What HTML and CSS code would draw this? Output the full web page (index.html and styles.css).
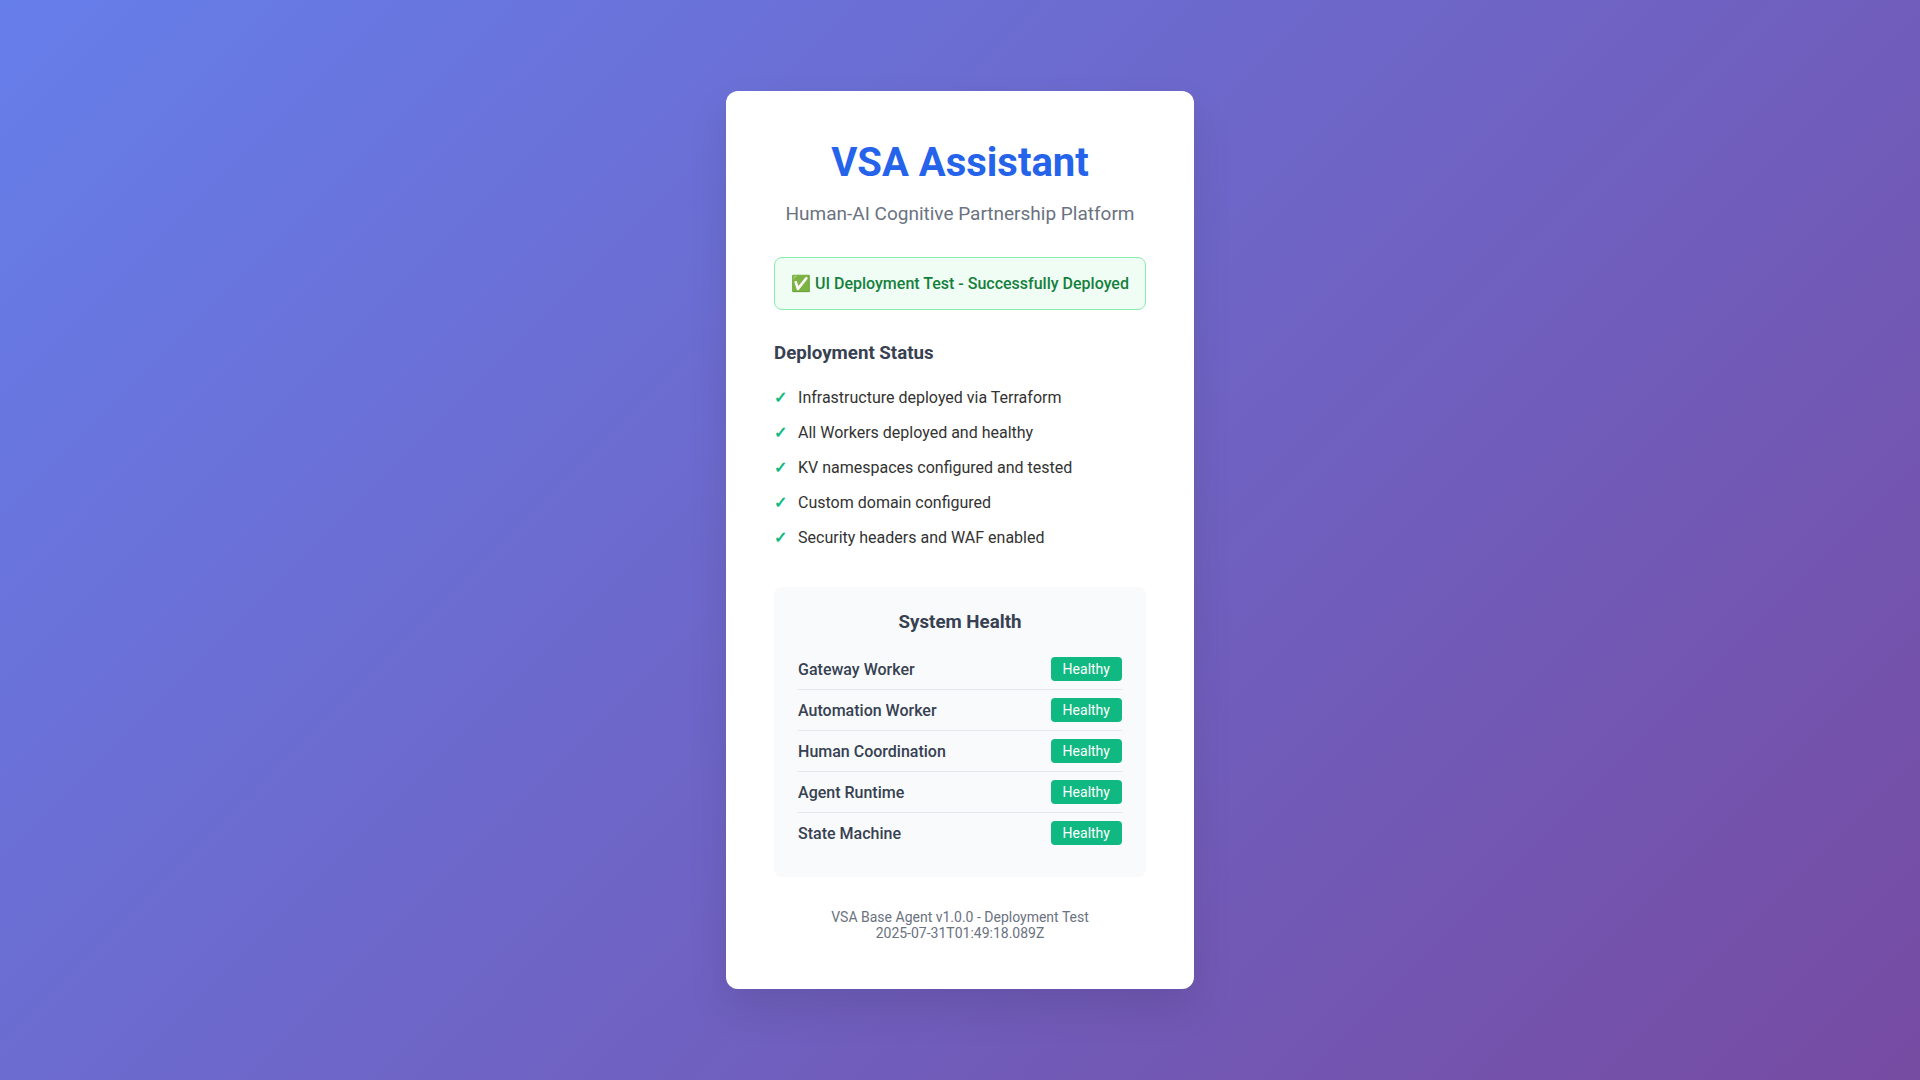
FILE: index.html
```html
<!DOCTYPE html>
<html lang="en">
<head>
    <meta charset="UTF-8">
    <meta name="viewport" content="width=device-width, initial-scale=1.0">
    <title>VSA Assistant</title>
    <link rel="stylesheet" href="styles.css">
</head>
<body>
    <main class="container">
        <h1>VSA Assistant</h1>
        <p class="subtitle">Human-AI Cognitive Partnership Platform</p>

        <div class="status">✅ UI Deployment Test - Successfully Deployed</div>

        <section class="features">
            <h3>Deployment Status</h3>
            <ul>
                <li>Infrastructure deployed via Terraform</li>
                <li>All Workers deployed and healthy</li>
                <li>KV namespaces configured and tested</li>
                <li>Custom domain configured</li>
                <li>Security headers and WAF enabled</li>
            </ul>
        </section>

        <section class="health">
            <h3>System Health</h3>
            <div class="health-item">
                <span class="health-name">Gateway Worker</span>
                <span class="health-badge">Healthy</span>
            </div>
            <div class="health-item">
                <span class="health-name">Automation Worker</span>
                <span class="health-badge">Healthy</span>
            </div>
            <div class="health-item">
                <span class="health-name">Human Coordination</span>
                <span class="health-badge">Healthy</span>
            </div>
            <div class="health-item">
                <span class="health-name">Agent Runtime</span>
                <span class="health-badge">Healthy</span>
            </div>
            <div class="health-item">
                <span class="health-name">State Machine</span>
                <span class="health-badge">Healthy</span>
            </div>
        </section>

        <footer class="footer">
            VSA Base Agent v1.0.0 - Deployment Test<br>
            2025-07-31T01:49:18.089Z
        </footer>
    </main>
</body>
</html>
```
FILE: styles.css
```css
/* Basic reset and font setup */
* {
    margin: 0;
    padding: 0;
    box-sizing: border-box;
}
body {
    font-family: Roboto, sans-serif;
    background: linear-gradient(135deg, #667eea 0%, #764ba2 100%);
    min-height: 100vh;
    display: flex;
    align-items: center;
    justify-content: center;
    color: #333;
}

/* Centered card */
.container {
    max-width: 600px;
    padding: 48px;
    background: #fff;
    border-radius: 12px;
    box-shadow: 0 20px 40px rgba(0, 0, 0, 0.1);
    text-align: center;
}

h1 {
    margin-bottom: 16px;
    color: #2563eb;
    font-size: 40px;
}
h3 {
    margin-bottom: 16px;
    color: #374151;
}
.subtitle {
    margin-bottom: 32px;
    color: #6b7280;
    font-size: 19px;
}

/* Deployment banner */
.status {
    margin-bottom: 32px;
    padding: 16px;
    background: #f0fdf4;
    border: 1px solid #86efac;
    border-radius: 8px;
    color: #15803d;
    font-weight: 500;
}

/* Checklist */
.features {
    margin-bottom: 32px;
    text-align: left;
}
.features ul {
    list-style: none;
}
.features li {
    display: flex;
    padding: 8px 0;
}
.features li::before {
    content: "✓";
    width: 24px;
    color: #10b981;
    font-weight: bold;
}

/* Worker health */
.health {
    margin-bottom: 32px;
    padding: 24px;
    background: #f8fafc;
    border-radius: 8px;
}
.health-item {
    display: flex;
    justify-content: space-between;
    align-items: center;
    padding: 8px 0;
    border-bottom: 1px solid #e5e7eb;
}
.health-item:last-child {
    border-bottom: none;
}
.health-name {
    color: #374151;
    font-weight: 500;
}
.health-badge {
    padding: 4px 12px;
    background: #10b981;
    border-radius: 4px;
    color: #fff;
    font-size: 14px;
}

.footer {
    color: #6b7280;
    font-size: 14px;
}
```
